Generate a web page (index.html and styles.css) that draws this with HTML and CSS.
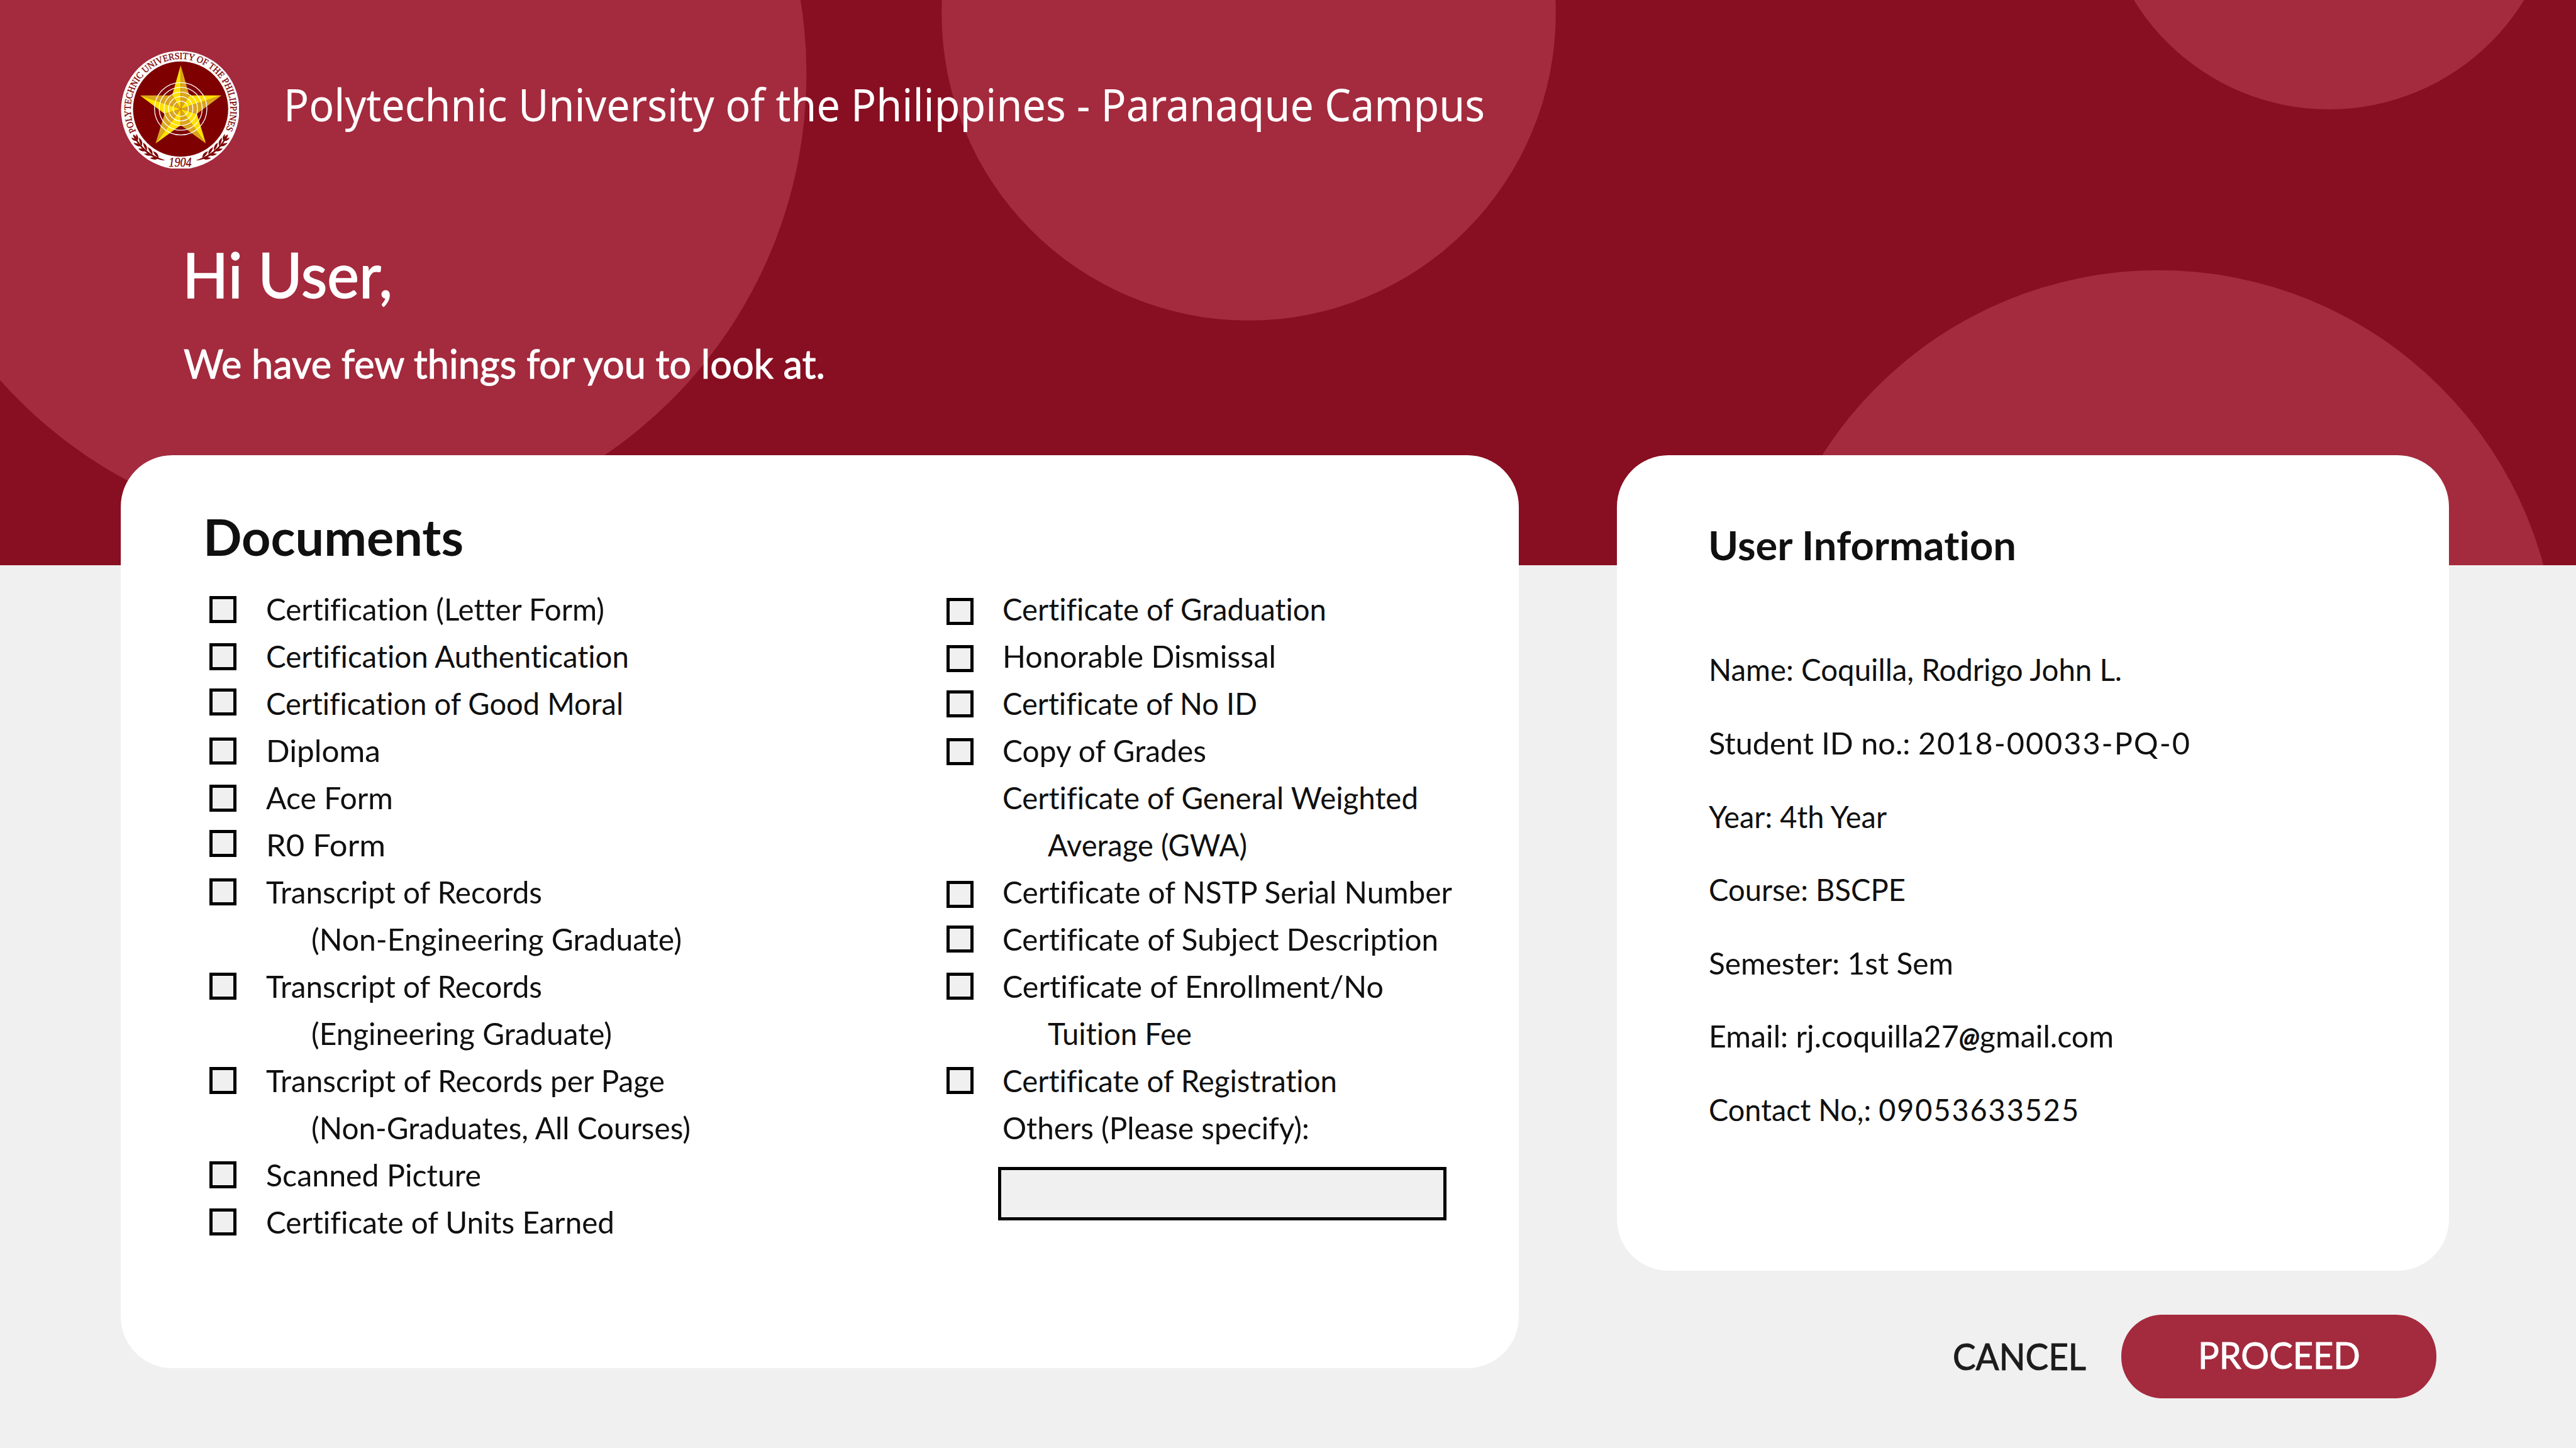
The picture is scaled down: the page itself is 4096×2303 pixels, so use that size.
FILE: index.html
```html
<!DOCTYPE html>
<html lang="en">
<head>
<meta charset="utf-8">
<title>Document Request</title>
<link rel="stylesheet" href="styles.css">
</head>
<body>
<div class="page">
  <svg class="backdrop" viewBox="0 0 4098 899" preserveAspectRatio="none" aria-hidden="true">
    <circle cx="549" cy="117.5" r="734"/>
    <circle cx="1986.5" cy="21.5" r="488.5"/>
    <circle cx="3705" cy="-190" r="364"/>
    <circle cx="3434" cy="1064" r="634"/>
  </svg>

  <header class="brand">
    <svg class="seal" viewBox="0 0 630 630" role="img" aria-label="University seal">
      <defs>
        <clipPath id="edge"><rect x="36" y="32" width="564" height="562"/></clipPath>
        <path id="ring" d="M109 417A238 238 0 1 1 534 417"/>
        <g id="pair">
          <path d="M0 0C-6 -15 -20 -21 -38 -18C-30 -14 -26 -4 0 0Z"/>
          <path d="M0 0C-6 15 -20 21 -38 18C-30 14 -26 4 0 0Z"/>
        </g>
        <g id="laurel">
          <path d="M248 555C225 545 150 525 104 440L99 444C140 525 215 558 248 555Z"/>
          <use href="#pair" transform="rotate(24 320 311) translate(320 565)"/>
          <use href="#pair" transform="rotate(31.5 320 311) translate(320 565)"/>
          <use href="#pair" transform="rotate(39 320 311) translate(320 565)"/>
          <use href="#pair" transform="rotate(46.5 320 311) translate(320 565)"/>
          <use href="#pair" transform="rotate(53.5 320 311) translate(320 565) scale(.8)"/>
          <path d="M0 0C-10 -8 -20 -7 -30 0C-20 6 -10 7 0 0Z" transform="rotate(55 320 311) translate(320 565)"/>
        </g>
      </defs>
      <circle cx="319.5" cy="315" r="282" fill="#fff" clip-path="url(#edge)"/>
      <circle cx="321.5" cy="310.5" r="227" fill="#7f0000"/>
      <g fill="#ffe100">
        <path d="M322 101L281 245L322 310Z"/>
        <path d="M517 245L363 245L322 310Z"/>
        <path d="M442 475L399 333L322 310Z"/>
        <path d="M202 475L322 387L322 310Z"/>
        <path d="M128 245L245 333L322 310Z"/>
      </g>
      <g fill="#dba520">
        <path d="M322 101L363 245L322 310Z"/>
        <path d="M517 245L399 333L322 310Z"/>
        <path d="M442 475L322 387L322 310Z"/>
        <path d="M202 475L245 333L322 310Z"/>
        <path d="M128 245L281 245L322 310Z"/>
      </g>
      <g fill="none" stroke="#fff" stroke-width="4">
        <circle cx="322" cy="309" r="125"/>
        <circle cx="322" cy="309" r="102.5"/>
        <circle cx="322" cy="309" r="80"/>
        <circle cx="322" cy="309" r="58"/>
        <circle cx="322" cy="309" r="36.5"/>
      </g>
      <g fill="#7f0000">
        <text class="seal-text"><textPath href="#ring" textLength="962" lengthAdjust="spacingAndGlyphs">POLYTECHNIC UNIVERSITY OF THE PHILIPPINES</textPath></text>
        <text class="seal-year" x="265" y="586" textLength="109" lengthAdjust="spacingAndGlyphs">1904</text>
        <use href="#laurel"/>
        <use href="#laurel" transform="translate(642 0) scale(-1 1)"/>
      </g>
    </svg>
    <span class="brand-name"><span class="fit" data-w="1910">Polytechnic University of the Philippines - Paranaque Campus</span></span>
  </header>

  <section class="greeting">
    <h1><span class="fit" data-w="334">Hi User,</span></h1>
    <p><span class="fit" data-w="1020">We have few things for you to look at.</span></p>
  </section>

  <main class="columns">
    <section class="card documents">
      <h2><span class="fit" data-w="414">Documents</span></h2>
      <div class="lists">
        <ul class="list">
          <li><input type="checkbox"><div><span class="fit" data-w="538">Certification (Letter Form)</span></div></li>
          <li><input type="checkbox"><div><span class="fit" data-w="577">Certification Authentication</span></div></li>
          <li><input type="checkbox" class="up"><div><span class="fit" data-w="568">Certification of Good Moral</span></div></li>
          <li><input type="checkbox"><div><span class="fit" data-w="182">Diploma</span></div></li>
          <li><input type="checkbox"><div><span class="fit" data-w="202">Ace Form</span></div></li>
          <li><input type="checkbox" class="up"><div><span class="fit" data-w="190">R0 Form</span></div></li>
          <li><input type="checkbox" class="up-1"><div><span class="fit" data-w="439">Transcript of Records</span><span class="sub"><span class="fit" data-w="589">(Non-Engineering Graduate)</span></span></div></li>
          <li><input type="checkbox" class="up-1"><div><span class="fit" data-w="439">Transcript of Records</span><span class="sub"><span class="fit" data-w="478">(Engineering Graduate)</span></span></div></li>
          <li><input type="checkbox" class="up-1"><div><span class="fit" data-w="634">Transcript of Records per Page</span><span class="sub"><span class="fit" data-w="603">(Non-Graduates, All Courses)</span></span></div></li>
          <li><input type="checkbox" class="up-1"><div><span class="fit" data-w="342">Scanned Picture</span></div></li>
          <li><input type="checkbox" class="up-1"><div><span class="fit" data-w="554">Certificate of Units Earned</span></div></li>
        </ul>
        <ul class="list second">
          <li><input type="checkbox" class="down"><div><span class="fit" data-w="515">Certificate of Graduation</span></div></li>
          <li><input type="checkbox" class="down"><div><span class="fit" data-w="435">Honorable Dismissal</span></div></li>
          <li><input type="checkbox"><div><span class="fit" data-w="405">Certificate of No ID</span></div></li>
          <li><input type="checkbox" class="down-1"><div><span class="fit" data-w="324">Copy of Grades</span></div></li>
          <li class="plain"><div><span class="fit" data-w="661">Certificate of General Weighted</span><span class="sub"><span class="fit" data-w="317">Average (GWA)</span></span></div></li>
          <li><input type="checkbox" class="down"><div><span class="fit" data-w="715">Certificate of NSTP Serial Number</span></div></li>
          <li><input type="checkbox" class="up-1"><div><span class="fit" data-w="693">Certificate of Subject Description</span></div></li>
          <li><input type="checkbox" class="up-1"><div><span class="fit" data-w="606">Certificate of Enrollment/No</span><span class="sub"><span class="fit" data-w="229">Tuition Fee</span></span></div></li>
          <li><input type="checkbox" class="up-1"><div><span class="fit" data-w="532">Certificate of Registration</span></div></li>
          <li class="plain"><div><span class="fit" data-w="488">Others (Please specify):</span></div></li>
          <li><input type="text" class="others" aria-label="Others"></li>
        </ul>
      </div>
    </section>

    <aside class="side">
      <section class="card info">
        <h3><span class="fit" data-w="490">User Information</span></h3>
        <p><span class="fit" data-w="657">Name: Coquilla, Rodrigo John L.</span></p>
        <p><span class="fit" data-w="767">Student ID no.: <span class="num">2018-00033-PQ-0</span></span></p>
        <p><span class="fit" data-w="283">Year: 4th Year</span></p>
        <p><span class="fit" data-w="313">Course: BSCPE</span></p>
        <p><span class="fit" data-w="389">Semester: 1st Sem</span></p>
        <p><span class="fit" data-w="644">Email: rj.coquilla27<span class="at">@</span>gmail.com</span></p>
        <p><span class="fit" data-w="590">Contact No,: <span class="num">09053633525</span></span></p>
      </section>
      <div class="actions">
        <button class="cancel"><span class="fit" data-w="212">CANCEL</span></button>
        <button class="proceed"><span class="fit" data-w="258">PROCEED</span></button>
      </div>
    </aside>
  </main>
</div>
<script src="fit.js"></script>
</body>
</html>
```
FILE: fit.js
```js
// Condense or widen each label horizontally to its design width.
document.querySelectorAll('.fit').forEach(function (el) {
  var scale = Number(el.dataset.w) / el.getBoundingClientRect().width;
  el.style.transform = 'scaleX(' + scale.toFixed(4) + ')';
});
```
FILE: styles.css
```css
* { box-sizing: border-box; margin: 0; padding: 0; }

body {
  width: 4096px;
  height: 2303px;
  overflow: hidden;
  background: #f0f0f0;
  color: #101010;
  font-family: Lato, "Noto Sans", sans-serif;
  font-size: 48.5px;
  font-variant-ligatures: none;
}

.page { position: relative; height: 2303px; display: flow-root; }

.backdrop {
  position: absolute;
  top: 0;
  left: 0;
  z-index: -1;
  display: block;
  width: 4096px;
  height: 898.6px;
  background: #880e21;
  fill: #a42a3d;
}

.fit { display: inline-block; white-space: nowrap; transform-origin: 0 50%; }

.brand { display: flex; align-items: flex-start; gap: 61px; margin: 70px 0 0 180px; color: #fff; }
.seal { display: block; width: 210px; height: 210px; }
.seal-text { font: 45px "Liberation Serif", serif; stroke: #7f0000; stroke-width: 1; }
.seal-year { font: italic 60px "Liberation Serif", serif; stroke: #7f0000; stroke-width: 1; }
.brand-name { font-family: "Noto Sans", sans-serif; font-size: 72px; line-height: 190px; }

.greeting { margin-top: 95.6px; color: #fff; -webkit-text-stroke: 1px #fff; }
.greeting h1 { margin-left: 289.5px; font-size: 98px; font-weight: 400; line-height: 120px; -webkit-text-stroke-width: 1.6px; }
.greeting p { margin: 42.2px 0 0 292.4px; font-size: 63.5px; line-height: 80px; }

.columns { display: flex; align-items: flex-start; gap: 156.2px; margin: 105.8px 0 0 191.9px; }
.card { background: #fff; border-radius: 82px; }

.documents { width: 2222.9px; height: 1452.4px; padding: 80.2px 0 0 131px; }
.documents h2 { font-size: 79.5px; font-weight: 700; line-height: 100px; }

.lists { display: flex; margin: 27.7px 0 0 9.9px; }
.list { width: 1172.4px; list-style: none; line-height: 75px; }
.list.second { width: 900px; }
.list li { display: flex; align-items: flex-start; gap: 47.5px; }
.list.second li { gap: 45.5px; }
.list.second .plain { padding-left: 88.5px; }
.list div > .fit { display: block; width: max-content; }
.sub { display: block; padding-left: 72px; }

input[type="checkbox"] {
  appearance: none;
  flex: none;
  width: 43px;
  height: 43px;
  margin-top: 16.3px;
  border: 5px solid #000;
  background: #f0f0f0;
}
input.up { margin-top: 13.3px; }
input.up-1 { margin-top: 15.3px; }
input.down { margin-top: 19.3px; }
input.down-1 { margin-top: 17.3px; }

.others {
  width: 713px;
  height: 85px;
  margin: 24.7px 0 0 81.8px;
  border: 5px solid #000;
  border-radius: 0;
  background: #f0f0f0;
}

.side { width: 1323px; }
.info { height: 1297.4px; padding: 103.6px 0 0 145.7px; }
.info h3 { margin: 0 0 99.1px -.5px; font-size: 64px; font-weight: 700; line-height: 80px; }
.info p { line-height: 116.65px; height: 116.65px; }
.num { letter-spacing: 2px; }
.at { font-size: 43px; font-weight: 900; font-style: italic; line-height: 1; }

.actions { display: flex; align-items: flex-start; margin: 70px 0 0 534.4px; }
.actions button { border: 0; background: none; font: 58px Lato, sans-serif; text-align: left; -webkit-text-stroke: 1px currentColor; }
.actions .cancel { width: 268px; height: 131px; line-height: 131px; color: #1c1c1c; }
.actions .proceed {
  width: 501px;
  height: 133px;
  padding: 0 0 6px 122px;
  border-radius: 65px;
  background: #a42a3d;
  color: #fff;
  line-height: 127px;
}
```
